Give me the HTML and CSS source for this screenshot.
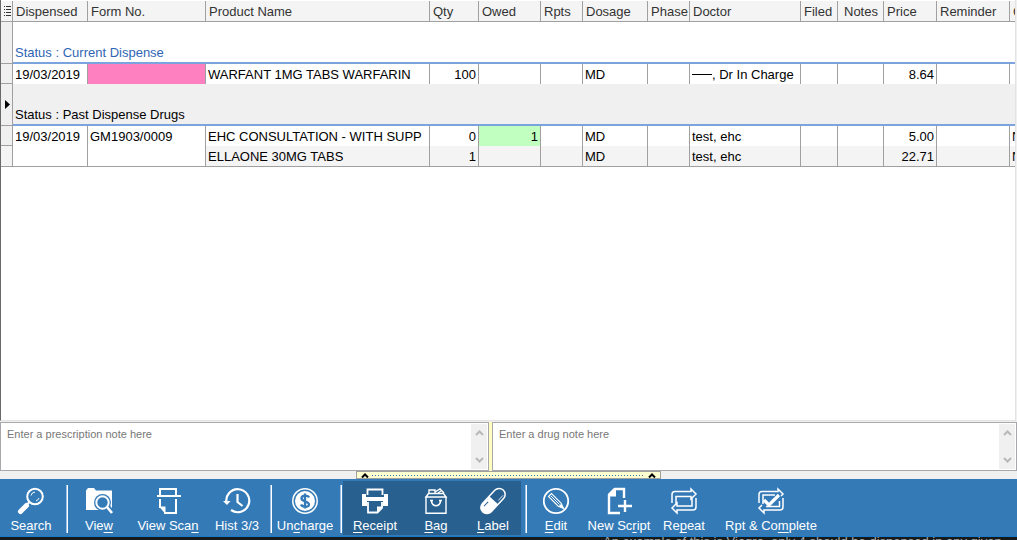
FILE: index.html
```html
<!DOCTYPE html>
<html lang="en">
<head>
<meta charset="utf-8">
<title>Dispense History</title>
<link rel="stylesheet" href="styles.css">
</head>
<body>
<main class="app">
  <section class="grid-panel">
    <table class="grid">
      <colgroup>
        <col class="c-gutter"><col class="c-date"><col class="c-form"><col class="c-product"><col class="c-qty"><col class="c-owed"><col class="c-rpts"><col class="c-dosage"><col class="c-phase"><col class="c-doctor"><col class="c-filed"><col class="c-notes"><col class="c-price"><col class="c-reminder"><col>
      </colgroup>
      <thead>
        <tr>
          <th class="corner"><svg width="7" height="10" viewBox="0 0 7 10" aria-hidden="true"><path d="M0 .5h1M2 .5h5M0 3.5h1M2 3.5h5M0 6.5h1M2 6.5h5M0 9.5h1M2 9.5h5" stroke="#333"/></svg></th>
          <th>Dispensed</th><th>Form No.</th><th>Product Name</th><th>Qty</th><th>Owed</th><th>Rpts</th><th>Dosage</th><th>Phase</th><th>Doctor</th><th>Filed</th><th class="notes">Notes</th><th>Price</th><th>Reminder</th><th>C</th>
        </tr>
      </thead>
      <tbody>
        <tr class="group"><td class="gutter"></td><td class="group-title current" colspan="14">Status : Current Dispense</td></tr>
        <tr>
          <td class="gutter"></td><td>19/03/2019</td><td class="pink"></td><td>WARFANT 1MG TABS WARFARIN</td><td class="num">100</td><td></td><td></td><td>MD</td><td></td><td><span class="dash"></span>, Dr In Charge</td><td></td><td></td><td class="num">8.64</td><td></td><td></td>
        </tr>
        <tr class="group"><td class="gutter"><svg width="5" height="9" viewBox="0 0 5 9" aria-label="Selected row"><path d="M0 0l5 4.500L0 9z"/></svg></td><td class="group-title past" colspan="14">Status : Past Dispense Drugs</td></tr>
        <tr>
          <td class="gutter"></td><td class="tall" rowspan="2">19/03/2019</td><td class="tall" rowspan="2">GM1903/0009</td><td>EHC CONSULTATION - WITH SUPP</td><td class="num">0</td><td class="num green">1</td><td></td><td>MD</td><td></td><td>test, ehc</td><td></td><td></td><td class="num">5.00</td><td></td><td>N</td>
        </tr>
        <tr class="alt">
          <td class="gutter"></td><td>ELLAONE 30MG TABS</td><td class="num">1</td><td></td><td></td><td>MD</td><td></td><td>test, ehc</td><td></td><td></td><td class="num">22.71</td><td></td><td>N</td>
        </tr>
      </tbody>
    </table>
  </section>

  <section class="note-row">
    <div class="note">
      <textarea aria-label="Prescription note" placeholder="Enter a prescription note here"></textarea>
      <div class="scroller"><svg width="9" height="6" viewBox="0 0 9 6"><path d="M1 5l3.500-3.500L8 5"/></svg><svg width="9" height="6" viewBox="0 0 9 6"><path d="M1 1l3.500 3.500L8 1"/></svg></div>
    </div>
    <div class="note">
      <textarea aria-label="Drug note" placeholder="Enter a drug note here"></textarea>
      <div class="scroller"><svg width="9" height="6" viewBox="0 0 9 6"><path d="M1 5l3.500-3.500L8 5"/></svg><svg width="9" height="6" viewBox="0 0 9 6"><path d="M1 1l3.500 3.500L8 1"/></svg></div>
    </div>
  </section>

  <div class="splitter">
    <button class="splitter-handle" aria-label="Toggle notes">
      <svg width="8" height="5" viewBox="0 0 8 5"><path d="M1 4.500l3-3 3 3"/></svg>
      <span class="dots"></span>
      <svg width="8" height="5" viewBox="0 0 8 5"><path d="M1 4.500l3-3 3 3"/></svg>
    </button>
  </div>

  <nav class="toolbar" aria-label="Actions">
    <button class="tool w62"><svg class="icon" viewBox="0 0 28 28"><circle cx="18" cy="9.500" r="7.800" stroke-width="2"/><path d="M14 8.500a4.500 4.500 0 0 1 4-3.500M22 11a5 5 0 0 1-3 3" stroke-width="1"/><path d="M12.500 15l-2.500 2.500" stroke-width="2"/><path d="M9.500 18.500l-6 6" stroke-width="5" stroke-linecap="round"/></svg><span>Se<u>a</u>rch</span></button>
    <i class="sep"></i>
    <button class="tool w58"><svg class="icon" viewBox="0 0 28 28"><path class="solid" d="M1 3.500l2-2.500h6l2 2.500h16V23H1z"/><circle cx="17.500" cy="15.500" r="8.500" class="cut"/><path d="M22 20l5 5.500" stroke="#337ab7" stroke-width="6"/><circle cx="17.500" cy="15.500" r="6.200" stroke-width="2"/><path d="M22 20l5 6" stroke-width="2.600"/></svg><span>Vie<u>w</u></span></button>
    <button class="tool w80"><svg class="icon" viewBox="0 0 28 28"><path d="M6 8V2h16v6M3 9h24M6 12v9M10 26h12V12" stroke-width="2"/><path class="solid" d="M5 19.500h6.500V27z"/></svg><span>View Sca<u>n</u></span></button>
    <button class="tool w58"><svg class="icon" viewBox="0 0 28 28"><path d="M3.500 16A11.500 11.500 0 1 1 8 23M14.500 7v8l5 4" stroke-width="2.200"/><path class="solid" d="M0 14h7.500L4 18z"/></svg><span>Hist 3/3</span></button>
    <i class="sep"></i>
    <button class="tool w62"><svg class="icon" viewBox="0 0 28 28"><circle cx="14" cy="14" r="12.200" stroke-width="1.500"/><circle cx="14" cy="14" r="10" class="solid"/><path d="M18 10.500C17 8 10 8 10.500 11.500S18 14 18 17.500 11 20 10 17.500M14 6.500v15" stroke="#337ab7" stroke-width="2.300"/></svg><span>Un<u>c</u>harge</span></button>
    <i class="sep tight"></i>
    <div class="pressed">
      <button class="tool w64"><svg class="icon" viewBox="0 0 28 28"><path d="M6.500 8V2.500h15V8" stroke-width="1.800"/><path class="solid" d="M1 7h4v3h18V7h4v12h-5v-5H6v5H1z"/><path d="M7 15v10.500h9.500l4.500-4.500v-6" stroke-width="1.800"/><path class="solid" d="M16 19.500h6L16 26z"/></svg><span><u>R</u>eceipt</span></button>
      <button class="tool w58"><svg class="icon" viewBox="0 0 28 28"><path d="M4 10L6.500 6.500h15L24 10z" stroke-width="1.400"/><path d="M4 9.500v16.700h20V9.500M7 7V3h6v3M13 5l5-3 4 4M16 6l3-2" stroke-width="1.400"/><path d="M9.500 13.500c0 7 9 7 9 0M8 13.500h3M17 13.500h3" stroke-width="1.700"/></svg><span><u>B</u>ag</span></button>
      <button class="tool w56"><svg class="icon" viewBox="0 0 28 28"><g transform="rotate(43 14 14)"><rect x="8" y="-1" width="12" height="30" rx="6" stroke-width="1.500"/><path class="solid" d="M8 13h12v10a6 6 0 0 1-12 0z"/><path d="M17.500 3v7" stroke-width=".8"/><path d="M11 18v6" stroke="#286090" stroke-width="1"/></g></svg><span><u>L</u>abel</span></button>
    </div>
    <i class="sep"></i>
    <button class="tool w54"><svg class="icon" viewBox="0 0 28 28"><circle cx="14" cy="14" r="12.200" stroke-width="1.800"/><path d="M6.500 9.500l3-3L19 16l2.500 5.500L16 19z" stroke-width="1.100"/><path d="M9 9l8.500 8.500" stroke-width="1"/><path class="solid" d="M18 18l1.500-1.500L22 22l-5.500-2.500z"/></svg><span><u>E</u>dit</span></button>
    <button class="tool w72"><svg class="icon" viewBox="0 0 28 28"><path d="M15 26H4V8l6-6h9v9M20 13v12M13 19h14" stroke-width="2.400"/><path class="solid" d="M3 9.500V7l6-6h2v8.500z"/></svg><span>New Sc<u>r</u>ipt</span></button>
    <button class="tool w58"><svg class="icon" viewBox="0 0 28 28"><path d="M2 16V7.500Q2 4.500 5 4.500h16V2l5 5-5 5V9.500H6V18M26 11v9q0 3-3 3H7v3l-5-5 5-5v3h15v-8" stroke-width="1.500"/></svg><span>Re<u>p</u>eat</span></button>
    <button class="tool w116"><svg class="icon" viewBox="0 0 28 28"><path d="M2 16V7.500Q2 4.500 5 4.500h16V2l5 5-2 2M18 8H6v9M26 11v9q0 3-3 3H7v3l-5-5 3-3M9 19.500h13.500V14" stroke-width="1.500"/><path d="M7 13l5 5L22 8" stroke-width="3.200"/></svg><span>Rpt &amp; Co<u>m</u>plete</span></button>
  </nav>
  <footer class="underlay">An example of this is Viagra, only 4 should be dispensed in any given</footer>
</main>
</body>
</html>
```
FILE: styles.css
```css
* { box-sizing: border-box; }

body {
  margin: 0;
  background: #f0f0f0;
  font: 13px/18px "Liberation Sans", Arial, sans-serif;
  color: #000;
}

.app {
  display: flex;
  flex-direction: column;
  height: 100vh;
  overflow: hidden;
}

button { font: inherit; border: 0; padding: 0; }

/* Grid */
.grid-panel {
  flex: 1;
  min-height: 0;
  margin-right: 1px;
  padding-top: 1px;
  overflow: hidden;
  background: #fff;
  border-left: 1px solid #696969;
  border-right: 1px solid #e3e3e3;
  border-bottom: 1px solid #e3e3e3;
}

.grid {
  width: 100%;
  table-layout: fixed;
  border-collapse: separate;
  border-spacing: 0;
}

.c-gutter { width: 12px; }
.c-date { width: 75px; }
.c-form { width: 118px; }
.c-product { width: 224px; }
.c-qty { width: 49px; }
.c-owed { width: 62px; }
.c-rpts { width: 42px; }
.c-dosage { width: 65px; }
.c-phase { width: 42px; }
.c-doctor { width: 111px; }
.c-filed { width: 37px; }
.c-notes { width: 46px; }
.c-price { width: 53px; }
.c-reminder { width: 73px; }

.grid th, .grid td {
  height: 20px;
  padding: 2px 2px 0;
  overflow: hidden;
  white-space: nowrap;
  text-align: left;
  border-right: 1px solid #a0a0a0;
}

.grid th {
  height: 21px;
  padding-left: 3px;
  padding-right: 0;
  font-weight: normal;
  color: #333;
  background: #f4f4f4;
  border-bottom: 1px solid #a0a0a0;
}

.grid th.notes { padding-left: 6px; }
.grid th.corner { padding-top: 0; line-height: 0; }
.grid th:last-child, .grid td:last-child { border-right: 0; }
.grid .num { text-align: right; }
.grid .tall { vertical-align: top; }
.grid .pink { background: #ff80c0; }
.grid .alt td { background: #f4f4f4; }
.grid .green { background: #c0ffc0; }

.grid .gutter {
  padding: 0 0 0 4px;
  line-height: 0;
  background: #f0f0f0;
  border-bottom: 1px solid #a0a0a0;
}

.grid .group-title {
  height: 42px;
  padding-bottom: 0;
  vertical-align: bottom;
  border-bottom: 2px solid #7ba3dd;
}

.current { color: #2f65b5; }
.past { background: #f0f0f0; }
.grid .alt td, .grid .tall { border-bottom: 1px solid #a0a0a0; }
.grid .alt td { height: 21px; }

.dash {
  display: inline-block;
  width: 20px;
  height: 1px;
  vertical-align: 4px;
  background: #000;
}

/* Notes */
.note-row {
  display: grid;
  grid-template-columns: 489fr 525fr;
  gap: 3px;
  height: 49px;
  margin-top: 1px;
  background: #ffffc0;
}

.note {
  display: flex;
  padding: 1px;
  background: #fff;
  border: 1px solid #a8a8ac;
}

.note textarea {
  flex: 1;
  min-width: 0;
  padding: 2px 5px;
  resize: none;
  overflow: hidden;
  border: 0;
  outline: 0;
  background: #fff;
  font: 11px/16px "Liberation Sans", Arial, sans-serif;
}

.note textarea::placeholder { color: #777; }

.scroller {
  display: flex;
  flex-direction: column;
  justify-content: space-between;
  align-items: center;
  width: 16px;
  padding: 6px 0;
  background: #f0f0f0;
}

.scroller path { fill: none; stroke: #b8b8b8; stroke-width: 2; }

/* Splitter */
.splitter {
  display: flex;
  justify-content: center;
  height: 8px;
}

.splitter-handle {
  display: flex;
  align-items: center;
  gap: 3px;
  width: 30%;
  height: 8px;
  padding: 0 4px;
  background: #ffffd0;
  border: 1px solid #a0a0a0;
}

.splitter-handle path { fill: none; stroke: #000; stroke-width: 2; }

.dots {
  flex: 1;
  height: 1px;
  background: repeating-linear-gradient(90deg, #337ab7 0 1px, transparent 1px 3px);
}

/* Toolbar */
.toolbar {
  display: flex;
  height: 58px;
  padding: 2px 0 1px;
  background: #337ab7;
  border-bottom: 1px solid #1979ca;
}

.tool {
  display: flex;
  flex-direction: column;
  align-items: center;
  padding-top: 6px;
  color: #fff;
  background: none;
  white-space: nowrap;
}

.tool span { line-height: 18px; margin-top: 2px; }
.tool u { text-underline-offset: 2px; text-decoration-skip-ink: none; }

.icon {
  width: 28px;
  height: 28px;
  fill: none;
  stroke: #fff;
}

.icon .solid { fill: #fff; stroke: none; }
.icon .cut { fill: #337ab7; stroke: none; }

.pressed { display: flex; background: #286090; }

.sep {
  width: 2px;
  margin: 4px 2px 2px 4px;
  background: #fff;
  border-left: 1px solid #9fc0e4;
}

.sep.tight { margin-right: 1px; }

.w54 { width: 54px; }
.w56 { width: 56px; }
.w58 { width: 58px; }
.w62 { width: 62px; }
.w64 { width: 64px; }
.w72 { width: 72px; }
.w80 { width: 80px; }
.w116 { width: 116px; }

.underlay {
  height: 3px;
  padding-left: 603px;
  overflow: hidden;
  white-space: nowrap;
  font-size: 13px;
  line-height: 10px;
  color: #aaa;
  background: #161a1a;
}
```
